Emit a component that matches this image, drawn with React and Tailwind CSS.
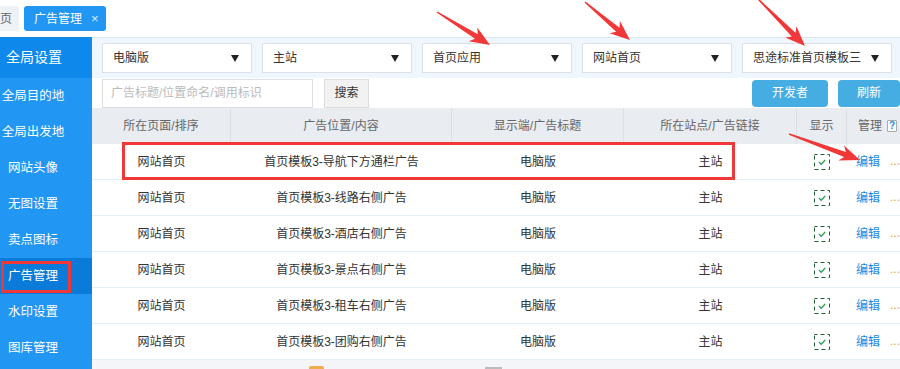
import React from "react";

function arrowPts(x1, y1, x2, y2, head = 20, hw = 8, tw0 = 0.7, tw1 = 2.6) {
  const dx = x2 - x1, dy = y2 - y1;
  const L = Math.hypot(dx, dy);
  const ux = dx / L, uy = dy / L;
  const px = -uy, py = ux;
  const bx = x2 - ux * head, by = y2 - uy * head;
  const nx = x2 - ux * (head - 4), ny = y2 - uy * (head - 4);
  const pts = [
    [x1 + px * tw0, y1 + py * tw0],
    [nx + px * tw1, ny + py * tw1],
    [bx + px * hw, by + py * hw],
    [x2, y2],
    [bx - px * hw, by - py * hw],
    [nx - px * tw1, ny - py * tw1],
    [x1 - px * tw0, y1 - py * tw0],
  ];
  return pts.map((p) => p[0].toFixed(1) + "," + p[1].toFixed(1)).join(" ");
}

function Tri() {
  return (
    <svg width="8" height="7" viewBox="0 0 8 7">
      <path d="M0 0h8L4 7z" fill="#222" />
    </svg>
  );
}

function Select({ label }) {
  return (
    <div className="w-[150px] h-[30px] bg-white border border-[#dcdfe6] flex items-center justify-between pl-[10px] pr-[12px] text-[12px] text-[#333]">
      <span>{label}</span>
      <Tri />
    </div>
  );
}

function Check() {
  return (
    <svg width="16" height="16" viewBox="0 0 16 16">
      <rect x="0.5" y="0.5" width="15" height="15" fill="none" stroke="#1f5e36" strokeDasharray="4 3" strokeDashoffset="1" />
      <path d="M5 8l2.2 2.2L11.2 6" stroke="#2f9e55" strokeWidth="1.3" fill="none" />
    </svg>
  );
}

const rows = [
  "首页模板3-导航下方通栏广告",
  "首页模板3-线路右侧广告",
  "首页模板3-酒店右侧广告",
  "首页模板3-景点右侧广告",
  "首页模板3-租车右侧广告",
  "首页模板3-团购右侧广告",
];

const side = ["全局目的地", "全局出发地", "网站头像", "无图设置", "卖点图标", "广告管理", "水印设置", "图库管理"];

export default function App() {
  return (
    <div className="relative w-[900px] h-[369px] overflow-hidden bg-white font-['Liberation_Sans','Noto_Sans_CJK_SC',sans-serif] text-[12px]">
      {/* top tabs */}
      <div className="h-[37px] flex items-start pt-[6px]">
        <div className="-ml-[22px] h-[25px] bg-[#eef1f6] rounded-[3px] pl-[10px] pr-[7px] flex items-center text-[#666]">首页</div>
        <div className="ml-[5px] h-[25px] bg-[#2196f3] rounded-[3px] pl-[10px] pr-[7px] flex items-center text-white">
          <span>广告管理</span>
          <span className="ml-[9px] text-[13px] text-[#dcecff] leading-none">×</span>
        </div>
      </div>

      <div className="flex h-[332px]">
        {/* sidebar */}
        <div className="w-[93px] bg-[#2196f3] flex flex-col text-white">
          <div className="h-[41px] bg-[#0f88eb] flex items-center">
            <span className="w-[68px] text-center text-[14px]">全局设置</span>
          </div>
          {side.map((s) => (
            <div key={s} className={"h-[36px] flex items-center " + (s === "广告管理" ? "bg-[#0a7bd9] w-[92px]" : "")}>
              <span className="w-[66px] text-center text-[12.5px]">{s}</span>
            </div>
          ))}
        </div>

        {/* main */}
        <div className="flex-1 flex flex-col bg-[#f4f5f9]">
          <div className="h-[41px] bg-[#eff6fd] border-t border-[#dce8f4] flex items-center gap-[10px] px-[10px]">
            <Select label="电脑版" />
            <Select label="主站" />
            <Select label="首页应用" />
            <Select label="网站首页" />
            <Select label="思途标准首页模板三" />
          </div>
          <div className="h-[30px] bg-white flex items-center pl-[10px] pr-[2px]">
            <div className="w-[211px] h-[29px] border border-[#dcdfe6] flex items-center pl-[8px] text-[#bbb]">广告标题/位置命名/调用标识</div>
            <div className="ml-[11px] w-[45px] h-[29px] bg-[#f2f2f2] border border-[#dddddd] flex items-center justify-center text-[#333]">搜索</div>
            <div className="ml-auto w-[76px] h-[27px] rounded-[4px] bg-[#46ade2] text-white flex items-center justify-center">开发者</div>
            <div className="ml-[10px] w-[62px] h-[27px] rounded-[4px] bg-[#46ade2] text-white flex items-center justify-center">刷新</div>
          </div>

          {/* table header */}
          <div className="h-[36px] bg-[#e9ecf1] grid grid-cols-[139px_221px_172px_173px_50px_1fr] text-[#666]">
            <div className="flex items-center justify-center border-r border-[#dcdfe5]">所在页面/排序</div>
            <div className="flex items-center justify-center border-r border-[#dcdfe5]">广告位置/内容</div>
            <div className="flex items-center justify-center border-r border-[#dcdfe5]">显示端/广告标题</div>
            <div className="flex items-center justify-center border-r border-[#dcdfe5]">所在站点/广告链接</div>
            <div className="flex items-center justify-center border-r border-[#dcdfe5]">显示</div>
            <div className="flex items-center pl-[11px]">
              <span>管理</span>
              <span className="ml-[5px] w-[10px] h-[12px] bg-white border border-[#aaa] rounded-[1px] text-[#1e88e5] text-[10px] font-bold leading-none flex items-center justify-center">?</span>
            </div>
          </div>

          {rows.map((r) => (
            <div key={r} className="h-[36px] bg-white border-b border-[#e1edf8] grid grid-cols-[139px_221px_172px_173px_50px_1fr] text-[#333]">
              <div className="flex items-center justify-center">网站首页</div>
              <div className="flex items-center justify-center">{r}</div>
              <div className="flex items-center justify-center">电脑版</div>
              <div className="flex items-center justify-center">主站</div>
              <div className="flex items-center justify-center"><Check /></div>
              <div className="flex items-center pl-[9px]">
                <span className="text-[#1e88e5]">编辑</span>
                <span className="ml-[10px] text-[#e6a23c] -mt-[2px]">...</span>
              </div>
            </div>
          ))}

          <div className="flex-1 flex items-end">
            <div className="ml-[217px] w-[15px] h-[3px] rounded-t-[2px] bg-[#f0ad4e]" />
            <div className="ml-[161px] w-[17px] h-[2px] bg-[#bbbbbb]" />
          </div>
        </div>
      </div>

      {/* annotations */}
      <svg className="absolute inset-0 pointer-events-none" width="900" height="369" viewBox="0 0 900 369">
        <rect x="123.5" y="143.5" width="610" height="35" fill="none" stroke="#f03838" strokeWidth="3" />
        <rect x="2.5" y="262.5" width="67" height="29" fill="none" stroke="#f03838" strokeWidth="3" />
        <polygon points={arrowPts(437, 12, 490, 45)} fill="#f03838" />
        <polygon points={arrowPts(585, 2, 630, 40)} fill="#f03838" />
        <polygon points={arrowPts(758, -1, 805, 46)} fill="#f03838" />
        <polygon points={arrowPts(789, 134, 860, 160)} fill="#f03838" />
      </svg>
    </div>
  );
}
